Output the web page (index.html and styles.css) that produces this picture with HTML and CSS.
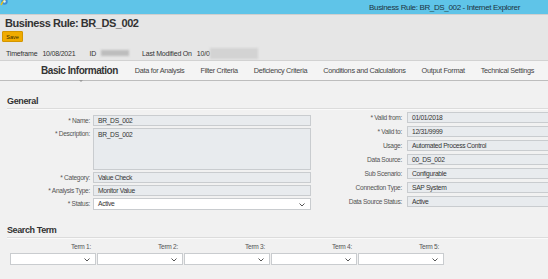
FILE: index.html
```html
<!DOCTYPE html>
<html lang="en">
<head>
  <meta charset="UTF-8">
  <link rel="stylesheet" href="styles.css">
</head>
<body>

  <div class="titlebar">
    <svg class="ie-icon" width="10" height="10" viewBox="0 0 10 10">
      <circle cx="4.5" cy="3.5" r="3.2" fill="#3a8fd6"/>
      <path d="M1 7 C3 2 7 0 9 1" stroke="#e8c21a" stroke-width="1.4" fill="none"/>
      <circle cx="4.5" cy="3.5" r="1.2" fill="#dff1fb"/>
    </svg>
    <span class="tb-title">Business Rule: BR_DS_002 - Internet Explorer</span>
  </div>

  <div class="header">
    <div class="page-title">Business Rule: BR_DS_002</div>
    <div class="btn-row">
      <button class="btn-save">Save</button>
    </div>
    <div class="meta">
      <span class="meta-label">Timeframe</span>
      <span class="meta-value">10/08/2021</span>
      <span class="meta-label id-label">ID</span>
      <span class="blurred blur-id"></span>
      <span class="meta-label lmo-label">Last Modified On</span>
      <span class="meta-value">10/0</span>
      <span class="blurred blur-date"></span>
    </div>
  </div>

  <div class="tabs">
    <div class="tab active">Basic Information</div>
    <div class="tab">Data for Analysis</div>
    <div class="tab">Filter Criteria</div>
    <div class="tab">Deficiency Criteria</div>
    <div class="tab">Conditions and Calculations</div>
    <div class="tab">Output Format</div>
    <div class="tab">Technical Settings</div>
  </div>

  <div class="content">
    <div class="section-title">General</div>

    <div class="general">
      <div class="form-col left-col">
        <div class="form-row">
          <label>* Name:</label>
          <div class="field">BR_DS_002</div>
        </div>
        <div class="form-row tall">
          <label>* Description:</label>
          <div class="field area">BR_DS_002</div>
        </div>
        <div class="form-row">
          <label>* Category:</label>
          <div class="field">Value Check</div>
        </div>
        <div class="form-row">
          <label>* Analysis Type:</label>
          <div class="field">Monitor Value</div>
        </div>
        <div class="form-row">
          <label>* Status:</label>
          <div class="field select">Active
            <svg class="chev" width="6" height="4" viewBox="0 0 6 4"><polyline points="0.5,0.5 3,3 5.5,0.5" fill="none" stroke="#555" stroke-width="1"/></svg>
          </div>
        </div>
      </div>

      <div class="form-col right-col">
        <div class="form-row">
          <label>* Valid from:</label>
          <div class="field">01/01/2018</div>
        </div>
        <div class="form-row">
          <label>* Valid to:</label>
          <div class="field">12/31/9999</div>
        </div>
        <div class="form-row">
          <label>Usage:</label>
          <div class="field">Automated Process Control</div>
        </div>
        <div class="form-row">
          <label>Data Source:</label>
          <div class="field">00_DS_002</div>
        </div>
        <div class="form-row">
          <label>Sub Scenario:</label>
          <div class="field">Configurable</div>
        </div>
        <div class="form-row">
          <label>Connection Type:</label>
          <div class="field">SAP System</div>
        </div>
        <div class="form-row">
          <label>Data Source Status:</label>
          <div class="field">Active</div>
        </div>
      </div>
    </div>

    <div class="section-title search-title">Search Term</div>

    <div class="terms">
      <div class="term">
        <div class="term-label">Term 1:</div>
        <div class="field select white"><svg class="chev" width="6" height="4" viewBox="0 0 6 4"><polyline points="0.5,0.5 3,3 5.5,0.5" fill="none" stroke="#555" stroke-width="1"/></svg></div>
      </div>
      <div class="term">
        <div class="term-label">Term 2:</div>
        <div class="field select white"><svg class="chev" width="6" height="4" viewBox="0 0 6 4"><polyline points="0.5,0.5 3,3 5.5,0.5" fill="none" stroke="#555" stroke-width="1"/></svg></div>
      </div>
      <div class="term">
        <div class="term-label">Term 3:</div>
        <div class="field select white"><svg class="chev" width="6" height="4" viewBox="0 0 6 4"><polyline points="0.5,0.5 3,3 5.5,0.5" fill="none" stroke="#555" stroke-width="1"/></svg></div>
      </div>
      <div class="term">
        <div class="term-label">Term 4:</div>
        <div class="field select white"><svg class="chev" width="6" height="4" viewBox="0 0 6 4"><polyline points="0.5,0.5 3,3 5.5,0.5" fill="none" stroke="#555" stroke-width="1"/></svg></div>
      </div>
      <div class="term">
        <div class="term-label">Term 5:</div>
        <div class="field select white"><svg class="chev" width="6" height="4" viewBox="0 0 6 4"><polyline points="0.5,0.5 3,3 5.5,0.5" fill="none" stroke="#555" stroke-width="1"/></svg></div>
      </div>
    </div>
  </div>

</body>
</html>
```

FILE: styles.css
```css
html, body {
  margin: 0;
  padding: 0;
  width: 548px;
  height: 279px;
  overflow: hidden;
  background-color: #f1f1f1;
  font-family: "Liberation Sans", Arial, sans-serif;
  color: #333;
}

.titlebar {
  height: 14px;
  background-color: #5fc4e8;
  display: flex;
  align-items: center;
  justify-content: flex-end;
  padding-right: 28px;
  position: relative;
}

.ie-icon {
  position: absolute;
  left: 0;
  top: -2px;
}

.tb-title {
  font-size: 8px;
  letter-spacing: -0.35px;
  color: #1d3442;
}

.header {
  height: 47px;
  background-color: #e6e6e6;
  border-top: 1px solid #cfcfcf;
  border-bottom: 1px solid #d2d2d2;
  padding-left: 5px;
  box-sizing: border-box;
}

.page-title {
  font-size: 11px;
  letter-spacing: -0.45px;
  font-weight: bold;
  line-height: 14px;
  color: #333;
  padding-top: 1px;
}

.btn-row {
  margin-top: 1px;
  margin-left: -3px;
}

.btn-save {
  display: block;
  height: 11px;
  width: 21px;
  padding: 0;
  font-family: inherit;
  font-size: 5.5px;
  color: #3a2a00;
  background-color: #f0ab00;
  border: 1px solid #d49600;
  border-radius: 1px;
}

.meta {
  display: flex;
  align-items: center;
  margin-top: 6px;
  margin-left: 1px;
  height: 10px;
  font-size: 7px;
  letter-spacing: -0.2px;
}

.meta-label {
  color: #333;
  margin-right: 5px;
}

.meta-value {
  color: #333;
}

.id-label {
  margin-left: 14px;
}

.lmo-label {
  margin-left: 13px;
}

.blurred {
  display: inline-block;
  background-color: #bdbdbd;
  filter: blur(1.2px);
}

.blur-id {
  width: 28px;
  height: 6px;
}

.blur-date {
  width: 48px;
  height: 11px;
  background-color: #d3d3d3;
}

.tabs {
  height: 19px;
  background-color: #f4f4f4;
  border-bottom: 1px solid #bdbdbd;
  display: flex;
  align-items: center;
  gap: 16px;
  padding-left: 41px;
}

.tab {
  font-size: 7.3px;
  letter-spacing: -0.3px;
  color: #444;
  white-space: nowrap;
}

.tab.active {
  font-size: 10px;
  letter-spacing: -0.45px;
  font-weight: bold;
  color: #333;
  position: relative;
  margin-right: 1px;
}

.tab.active::after {
  content: "";
  position: absolute;
  left: 38px;
  bottom: -6px;
  border-left: 2px solid transparent;
  border-right: 2px solid transparent;
  border-top: 2px solid #9a9a9a;
}

.content {
  padding-top: 14px;
}

.section-title {
  font-size: 9px;
  letter-spacing: -0.35px;
  font-weight: bold;
  color: #333;
  line-height: 12px;
  margin-left: 7px;
  padding-bottom: 1px;
  border-bottom: 1px solid #dcdcdc;
  box-shadow: 0 1px 0 #fafafa;
}

.general {
  display: flex;
}

.form-col {
  display: flex;
  flex-direction: column;
}

.left-col {
  margin-left: 7px;
  margin-top: 6px;
  gap: 2px;
}

.right-col {
  margin-left: 11px;
  margin-top: 3px;
  gap: 3px;
}

.form-row {
  display: flex;
  align-items: flex-start;
  gap: 3px;
}

.left-col label {
  width: 83px;
}

.right-col label {
  width: 80px;
}

.right-col .form-row {
  gap: 5px;
}

label {
  font-size: 6.6px;
  letter-spacing: -0.3px;
  color: #555;
  text-align: right;
  line-height: 11px;
  white-space: nowrap;
}

.field {
  height: 11px;
  box-sizing: border-box;
  background-color: #e8ebee;
  border: 1px solid #c9cccf;
  font-size: 6.7px;
  letter-spacing: -0.3px;
  line-height: 9px;
  padding-left: 4px;
  color: #333;
  position: relative;
}

.left-col .field {
  width: 218px;
}

.right-col .field {
  width: 146px;
}

.field.area {
  height: 42px;
  padding-top: 1px;
}

.field.select {
  background-color: #fff;
  height: 12px;
  line-height: 10px;
}

.chev {
  position: absolute;
  right: 5px;
  top: 4px;
}

.search-title {
  margin-top: 14px;
  letter-spacing: -0.4px;
}

.terms {
  display: flex;
  gap: 1px;
  margin-left: 10px;
  margin-top: 4px;
}

.term {
  width: 86px;
}

.term-label {
  font-size: 6.6px;
  letter-spacing: -0.3px;
  color: #555;
  text-align: right;
  padding-right: 5px;
  line-height: 9px;
  margin-bottom: 2px;
}

.terms .field {
  width: 86px;
}
```
